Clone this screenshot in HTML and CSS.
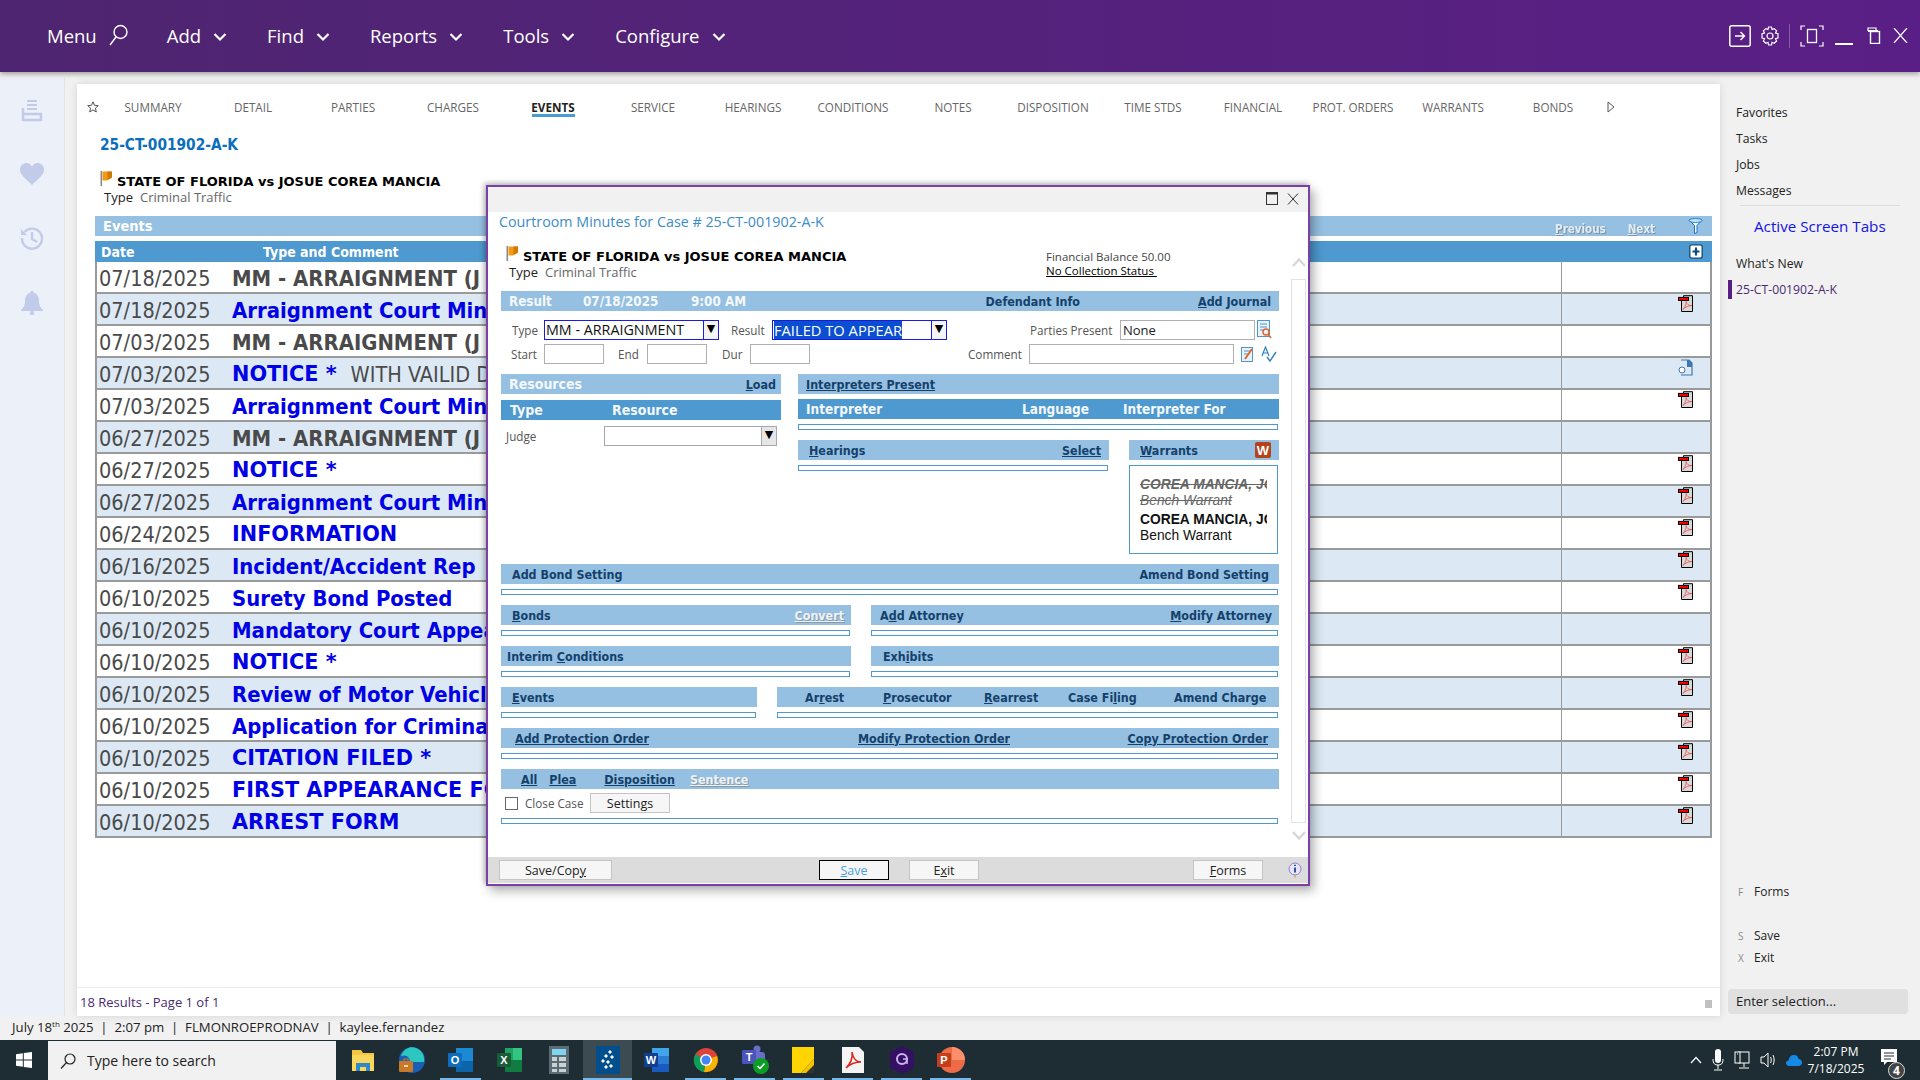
FILE: index.html
```html
<!DOCTYPE html>
<html lang="en">
<head>
<meta charset="utf-8">
<title>Courtroom Minutes</title>
<link rel="stylesheet" href="styles.css">
</head>
<body>
<svg class="defs" width="0" height="0" aria-hidden="true">
  <symbol id="pdf" viewBox="0 0 15 17">
    <path d="M3.500 5.500V16.500H14.500V0.700H5.500V2" fill="#d8d8d8" stroke="#000" stroke-width="1"/>
    <rect x="0.500" y="2.400" width="10" height="3" fill="#f00" stroke="#000" stroke-width="1"/>
    <path d="M5 14.500C7 12 8.500 9 8 6.500C8.500 9 11 11 14 10.500C11 10.500 7 12 5 14.500Z" fill="none" stroke="#f05050" stroke-width="0.800"/>
  </symbol>
  <symbol id="flag" viewBox="0 0 13 15">
    <rect x="0.500" y="0" width="1.600" height="15" fill="#8a8a8a"/>
    <path d="M2.500 0.500H12V6.500L7 9.500H2.500Z" fill="#f29b12"/>
    <path d="M7.500 0.500H12V6.500L7.500 9Z" fill="#cf7a06"/>
  </symbol>
  <symbol id="chev" viewBox="0 0 14 10"><path d="M1.500 2L7 7.500L12.500 2" fill="none" stroke="#fff" stroke-width="2.200"/></symbol>
</svg>

<div class="app">
  <header class="topbar">
    <nav class="topnav">
      <span class="tn tn-menu">Menu<svg class="tn-search" width="22" height="22" viewBox="0 0 22 22"><circle cx="13.500" cy="8" r="6.500" fill="none" stroke="#fff" stroke-width="1.400"/><path d="M9 13L3 21" stroke="#fff" stroke-width="1.400"/></svg></span>
      <span class="tn">Add<svg class="chev"><use href="#chev"/></svg></span>
      <span class="tn">Find<svg class="chev"><use href="#chev"/></svg></span>
      <span class="tn">Reports<svg class="chev"><use href="#chev"/></svg></span>
      <span class="tn">Tools<svg class="chev"><use href="#chev"/></svg></span>
      <span class="tn">Configure<svg class="chev"><use href="#chev"/></svg></span>
    </nav>
    <div class="wincontrols">
      <svg class="wc wc-login" width="22" height="22" viewBox="0 0 22 22"><rect x="0.800" y="0.800" width="20.400" height="20.400" rx="2" fill="none" stroke="#fff" stroke-width="1.500"/><path d="M6 11H15M11.500 7L15.500 11L11.500 15" fill="none" stroke="#fff" stroke-width="1.400"/></svg>
      <svg class="wc wc-gear" width="20" height="20" viewBox="0 0 20 20"><circle cx="10" cy="10" r="3" fill="none" stroke="#fff" stroke-width="1.200"/><path d="M8.500 1H11.500L12 3.500L14.200 2.600L16.600 4.800L15.500 7L18 7.700V12L15.500 12.700L16.600 15L14.200 17.300L12 16.300L11.500 19H8.500L8 16.300L5.800 17.300L3.400 15L4.500 12.700L2 12V7.700L4.500 7L3.400 4.800L5.800 2.600L8 3.500Z" fill="none" stroke="#fff" stroke-width="1.200"/></svg>
      <span class="wc-div"></span>
      <svg class="wc wc-expand" width="24" height="22" viewBox="0 0 24 22"><path d="M1 5V1H5M19 1H23V5M23 17V21H19M5 21H1V17" fill="none" stroke="#fff" stroke-width="1.200"/><rect x="7.500" y="4.500" width="9" height="13" fill="none" stroke="#fff" stroke-width="1.300"/></svg>
      <svg class="wc wc-min" width="18" height="22" viewBox="0 0 18 22"><rect x="0" y="18" width="18" height="2" fill="#fff"/></svg>
      <svg class="wc wc-restore" width="16" height="17" viewBox="0 0 16 17"><path d="M2 4V1H10V4" fill="none" stroke="#fff" stroke-width="1.200"/><rect x="4.500" y="4.500" width="9" height="12" fill="none" stroke="#fff" stroke-width="1.400"/><rect x="2" y="3" width="10" height="2" fill="#fff"/></svg>
      <svg class="wc wc-x" width="15" height="15" viewBox="0 0 15 15"><path d="M1 0L14 15M14 0L1 15" stroke="#fff" stroke-width="1.200"/></svg>
    </div>
  </header>

  <div class="workspace">
    <aside class="rail">
      <svg width="22" height="22" viewBox="0 0 22 22"><path d="M6 1H16M6 5H16M6 9H16" stroke="#c3cbea" stroke-width="2"/><path d="M2 8V20H20V14H2" fill="none" stroke="#c3cbea" stroke-width="2.500"/></svg>
      <svg width="24" height="22" viewBox="0 0 24 22"><path d="M12 22C6 16 0 12 0 6.500C0 2.500 3 0 6.500 0C9 0 11 1.300 12 3.500C13 1.300 15 0 17.500 0C21 0 24 2.500 24 6.500C24 12 18 16 12 22Z" fill="#c3cbea"/></svg>
      <svg width="24" height="24" viewBox="0 0 24 24"><path d="M4.500 6A10 10 0 1 1 2 12" fill="none" stroke="#c3cbea" stroke-width="2.400"/><path d="M1 3V9H7Z" fill="#c3cbea"/><path d="M12 6V13L17 16" fill="none" stroke="#c3cbea" stroke-width="2.400"/></svg>
      <svg width="22" height="24" viewBox="0 0 22 24"><path d="M11 0C12.500 0 13 1 13 2C16.500 3 18 6 18 10C18 15 20 17 22 19V20H0V19C2 17 4 15 4 10C4 6 5.500 3 9 2C9 1 9.500 0 11 0Z" fill="#c3cbea"/><circle cx="11" cy="22" r="2.200" fill="#c3cbea"/></svg>
    </aside>

    <main class="panel">
      <div class="tabs">
        <svg class="tab-star" width="12" height="12" viewBox="0 0 12 12"><path d="M6 0.800L7.500 4.300L11.300 4.600L8.400 7.100L9.300 11L6 8.900L2.700 11L3.600 7.100L0.700 4.600L4.500 4.300Z" fill="none" stroke="#555" stroke-width="1"/></svg>
        <span class="tab">SUMMARY</span><span class="tab">DETAIL</span><span class="tab">PARTIES</span><span class="tab">CHARGES</span><span class="tab tab-on">EVENTS</span><span class="tab">SERVICE</span><span class="tab">HEARINGS</span><span class="tab">CONDITIONS</span><span class="tab">NOTES</span><span class="tab">DISPOSITION</span><span class="tab">TIME STDS</span><span class="tab">FINANCIAL</span><span class="tab">PROT. ORDERS</span><span class="tab">WARRANTS</span><span class="tab">BONDS</span>
        <svg class="tab-more" width="8" height="12" viewBox="0 0 8 12"><path d="M1 1L7 6L1 11Z" fill="none" stroke="#555" stroke-width="1"/></svg>
      </div>
      <div class="caseno">25-CT-001902-A-K</div>
      <div class="casetitle"><svg class="flag"><use href="#flag"/></svg><b>STATE OF FLORIDA vs JOSUE COREA MANCIA</b></div>
      <div class="casetype"><span>Type</span><em>Criminal Traffic</em></div>

      <section class="events">
        <div class="ev-bar"><b>Events</b><span class="ev-links"><u>P</u>revious<span class="ev-next"><u>N</u>ext</span></span>
          <svg class="ev-filter" width="15" height="16" viewBox="0 0 15 16"><path d="M1 2H14L9 7.500V14.500L6.500 15.500V7.500Z" fill="#fff" stroke="#1173c7" stroke-width="1"/><ellipse cx="7.500" cy="2.500" rx="6.500" ry="2" fill="#bfe0f7" stroke="#1173c7" stroke-width="0.800"/></svg>
        </div>
        <div class="ev-head"><span class="ev-date">Date</span><span class="ev-type">Type and Comment</span>
          <svg class="ev-plus" width="14" height="15" viewBox="0 0 14 15"><rect x="0.800" y="0.800" width="12.400" height="13.400" rx="2" fill="#fff" stroke="#0f4a78" stroke-width="1.300"/><path d="M7 3.500V11.500M3.500 7.500H10.500" stroke="#0f4a78" stroke-width="2.200"/></svg>
        </div>
        <div class="rows">
          <div class="row"><span class="d">07/18/2025</span><span class="t mc">MM - ARRAIGNMENT (J</span><span class="ic"></span></div>
          <div class="row"><span class="d">07/18/2025</span><span class="t l mc">Arraignment Court Min</span><span class="ic"><svg class="pdf"><use href="#pdf"/></svg></span></div>
          <div class="row"><span class="d">07/03/2025</span><span class="t mc">MM - ARRAIGNMENT (J</span><span class="ic"></span></div>
          <div class="row"><span class="d">07/03/2025</span><span class="t l">NOTICE *</span><span class="c">WITH VAILID D</span><span class="ic"><svg class="pdf" viewBox="0 0 15 17"><path d="M3 1H11L14 4V16H3" fill="#dce9f4" stroke="#3f77b0" stroke-width="1.200"/><path d="M9 1H11L14 4V8H9Z" fill="#3f77b0"/><circle cx="4" cy="11" r="3" fill="#fff" stroke="#3f77b0" stroke-width="1"/></svg></span></div>
          <div class="row"><span class="d">07/03/2025</span><span class="t l mc">Arraignment Court Min</span><span class="ic"><svg class="pdf"><use href="#pdf"/></svg></span></div>
          <div class="row"><span class="d">06/27/2025</span><span class="t mc">MM - ARRAIGNMENT (J</span><span class="ic"></span></div>
          <div class="row"><span class="d">06/27/2025</span><span class="t l">NOTICE *</span><span class="ic"><svg class="pdf"><use href="#pdf"/></svg></span></div>
          <div class="row"><span class="d">06/27/2025</span><span class="t l mc">Arraignment Court Min</span><span class="ic"><svg class="pdf"><use href="#pdf"/></svg></span></div>
          <div class="row"><span class="d">06/24/2025</span><span class="t l">INFORMATION</span><span class="ic"><svg class="pdf"><use href="#pdf"/></svg></span></div>
          <div class="row"><span class="d">06/16/2025</span><span class="t l mc">Incident/Accident Rep</span><span class="ic"><svg class="pdf"><use href="#pdf"/></svg></span></div>
          <div class="row"><span class="d">06/10/2025</span><span class="t l mc">Surety Bond Posted</span><span class="ic"><svg class="pdf"><use href="#pdf"/></svg></span></div>
          <div class="row"><span class="d">06/10/2025</span><span class="t l mc">Mandatory Court Appea</span><span class="ic"></span></div>
          <div class="row"><span class="d">06/10/2025</span><span class="t l">NOTICE *</span><span class="ic"><svg class="pdf"><use href="#pdf"/></svg></span></div>
          <div class="row"><span class="d">06/10/2025</span><span class="t l mc">Review of Motor Vehicl</span><span class="ic"><svg class="pdf"><use href="#pdf"/></svg></span></div>
          <div class="row"><span class="d">06/10/2025</span><span class="t l mc">Application for Crimina</span><span class="ic"><svg class="pdf"><use href="#pdf"/></svg></span></div>
          <div class="row"><span class="d">06/10/2025</span><span class="t l">CITATION FILED *</span><span class="ic"><svg class="pdf"><use href="#pdf"/></svg></span></div>
          <div class="row"><span class="d">06/10/2025</span><span class="t l">FIRST APPEARANCE FO</span><span class="ic"><svg class="pdf"><use href="#pdf"/></svg></span></div>
          <div class="row"><span class="d">06/10/2025</span><span class="t l">ARREST FORM</span><span class="ic"><svg class="pdf"><use href="#pdf"/></svg></span></div>
        </div>
      </section>

      <footer class="panelfoot"><span>18 Results - Page 1 of 1</span><i class="grip"></i></footer>
    </main>

    <aside class="side">
      <a class="si">Favorites</a>
      <a class="si">Tasks</a>
      <a class="si">Jobs</a>
      <a class="si">Messages</a>
      <hr class="side-hr">
      <div class="side-head">Active Screen Tabs</div>
      <a class="si si-new">What's New</a>
      <a class="si si-active">25-CT-001902-A-K</a>
      <div class="side-keys">
        <a class="key"><i>F</i>Forms</a>
        <a class="key key-save"><i>S</i>Save</a>
        <a class="key"><i>X</i>Exit</a>
      </div>
      <div class="side-input">Enter selection...</div>
    </aside>
  </div>

  <div class="status">July 18<sup>th</sup> 2025&nbsp; | &nbsp;2:07 pm&nbsp; | &nbsp;FLMONROEPRODNAV&nbsp; | &nbsp;kaylee.fernandez</div>

  <div class="taskbar">
    <span class="start"><svg width="16" height="16" viewBox="0 0 16 16"><path d="M0 2.300L6.800 1.300V7.600H0ZM7.800 1.100L16 0V7.600H7.800ZM0 8.500H6.800V14.800L0 13.800ZM7.800 8.500H16V16L7.800 14.900Z" fill="#fff"/></svg></span>
    <div class="search"><svg width="16" height="16" viewBox="0 0 16 16"><circle cx="10" cy="6" r="5" fill="none" stroke="#222" stroke-width="1.200"/><path d="M6.500 9.500L1 15.500" stroke="#222" stroke-width="1.200"/></svg><span>Type here to search</span></div>
    <div class="apps">
      <span class="app-i"><svg width="24" height="26" viewBox="0 0 24 26"><path d="M1 3H10L12 6H23V24H1Z" fill="#f4c542"/><rect x="1" y="8" width="22" height="16" fill="#f9d65c"/><rect x="5" y="16" width="14" height="8" fill="#2f88c9"/><rect x="9" y="20" width="6" height="4" fill="#f9d65c"/></svg></span>
      <span class="app-i"><svg width="28" height="28" viewBox="0 0 28 28"><circle cx="14" cy="14" r="13" fill="#1a5fb4"/><path d="M3 10C6 2 13 0 18 2C24 4 27 10 26 16H12C12 12 9 8 3 10Z" fill="#2cc8c0"/><rect x="1" y="15" width="14" height="11" rx="1" fill="#c9792a"/><rect x="6" y="13" width="4" height="3" fill="none" stroke="#c9792a"/><rect x="6" y="19" width="4" height="2" fill="#f1d9a0"/></svg></span>
      <span class="app-i app-on"><svg width="26" height="26" viewBox="0 0 26 26"><rect x="8" y="1" width="17" height="24" fill="#1a8ad4"/><path d="M8 14H25V25H8Z" fill="#0c64ab"/><rect x="0" y="6" width="14" height="14" rx="1" fill="#0f6cbd"/><text x="7" y="17" class="ti">O</text></svg></span>
      <span class="app-i"><svg width="26" height="26" viewBox="0 0 26 26"><rect x="8" y="1" width="17" height="24" fill="#21a366"/><rect x="16" y="1" width="9" height="24" fill="#33c481"/><rect x="8" y="13" width="17" height="12" fill="#107c41"/><rect x="0" y="6" width="14" height="14" rx="1" fill="#185c37"/><text x="7" y="17" class="ti">X</text></svg></span>
      <span class="app-i"><svg width="20" height="28" viewBox="0 0 20 28"><rect width="20" height="28" fill="#5d6b73"/><rect x="3" y="3" width="14" height="6" fill="#7fd4f0"/><path d="M3 11H8V15H3ZM10 11H17V15H10ZM3 17H8V21H3ZM10 17H17V21H10ZM3 23H8V26H3ZM10 23H17V26H10Z" fill="#c9d2d6"/></svg></span>
      <span class="app-i app-on app-cur"><svg width="24" height="28" viewBox="0 0 24 28"><rect width="24" height="28" fill="#004f8c"/><path d="M14 4L16 6L14 8L12 6ZM10 8L12 10L10 12L8 10ZM16 9L18 11L16 13L14 11ZM7 13L9 15L7 17L5 15ZM12 14L14 16L12 18L10 16ZM10 19L12 21L10 23L8 21ZM15 18L17 20L15 22L13 20Z" fill="#fff"/></svg></span>
      <span class="app-i"><svg width="26" height="26" viewBox="0 0 26 26"><rect x="8" y="1" width="17" height="24" fill="#41a5ee"/><rect x="8" y="9" width="17" height="8" fill="#2b7cd3"/><rect x="8" y="17" width="17" height="8" fill="#185abd"/><rect x="0" y="6" width="14" height="14" rx="1" fill="#103f91"/><text x="7" y="17" class="ti">W</text></svg></span>
      <span class="app-i app-on"><svg width="26" height="26" viewBox="0 0 26 26"><circle cx="13" cy="13" r="12" fill="#db4437"/><path d="M13 13L24 9A12 12 0 0 1 11 25Z" fill="#f4b400"/><path d="M13 13L11 25A12 12 0 0 1 2.500 7Z" fill="#0f9d58"/><circle cx="13" cy="13" r="6" fill="#fff"/><circle cx="13" cy="13" r="4.500" fill="#4285f4"/></svg></span>
      <span class="app-i app-on"><svg width="28" height="32" viewBox="0 0 28 32"><circle cx="16" cy="5" r="3.500" fill="#6a6ec9"/><rect x="10" y="8" width="14" height="12" rx="3" fill="#6a6ec9"/><rect x="1" y="6" width="14" height="14" rx="1" fill="#4b53bc"/><text x="8" y="17" class="ti">T</text><circle cx="20" cy="22" r="8" fill="#0c9d25"/><path d="M16.500 22L19 24.500L23.500 19.500" fill="none" stroke="#fff" stroke-width="1.500"/></svg></span>
      <span class="app-i app-on"><svg width="24" height="26" viewBox="0 0 24 26"><rect width="22" height="26" fill="#ffd400"/><path d="M22 12V26H9Z" fill="#333"/><path d="M22 12L9 26H14L22 18Z" fill="#f5c400"/></svg></span>
      <span class="app-i app-on"><svg width="22" height="26" viewBox="0 0 22 26"><path d="M0 0H17L22 5V26H0Z" fill="#f4f4f4"/><path d="M4 21C8 17 11 11 10 5C11 11 14 15 19 15C14 15 8 17 4 21Z" fill="none" stroke="#d9241c" stroke-width="1.500"/></svg></span>
      <span class="app-i app-on"><svg width="24" height="28" viewBox="0 0 24 28"><path d="M12 0L24 6V22L12 28L0 22V6Z" fill="#341063"/><circle cx="12" cy="13" r="5" fill="none" stroke="#cbb2f0" stroke-width="2"/><path d="M13 13H17V18" fill="none" stroke="#cbb2f0" stroke-width="1.500"/></svg></span>
      <span class="app-i app-on"><svg width="28" height="26" viewBox="0 0 28 26"><circle cx="15" cy="13" r="13" fill="#ed6c47"/><path d="M15 0A13 13 0 0 1 28 13H15Z" fill="#ff8f6b"/><rect x="0" y="6" width="14" height="14" rx="1" fill="#c43e1c"/><text x="7" y="17" class="ti">P</text></svg></span>
    </div>
    <div class="tray">
      <svg width="12" height="8" viewBox="0 0 12 8"><path d="M1 7L6 1.500L11 7" fill="none" stroke="#fff" stroke-width="1.200"/></svg>
      <svg width="12" height="22" viewBox="0 0 12 22"><rect x="3" y="0" width="6" height="14" rx="3" fill="#fff"/><path d="M1 10C1 15 3 16 6 16C9 16 11 15 11 10M6 16V20M2 21H10" fill="none" stroke="#fff" stroke-width="1"/></svg>
      <svg width="16" height="18" viewBox="0 0 16 18"><rect x="5" y="1" width="10" height="11" fill="none" stroke="#fff"/><rect x="1" y="1" width="5" height="11" fill="#1d2d33" stroke="#fff"/><path d="M3 3H4M10 12V16M5 17H15" stroke="#fff"/></svg>
      <svg width="16" height="18" viewBox="0 0 16 18"><path d="M1 6H4L8 2V16L4 12H1Z" fill="none" stroke="#fff"/><path d="M10.500 6C11.500 8 11.500 10 10.500 12M13 4C14.500 7 14.500 11 13 14" fill="none" stroke="#fff"/></svg>
      <svg width="16" height="12" viewBox="0 0 16 12"><path d="M3 12C1 12 0 10.500 0 9C0 7.500 1 6.500 2.500 6.500C3 3 5 1 8 1C10.500 1 12 2.500 12.500 5C14.500 5 16 6.500 16 8.500C16 10.500 14.500 12 12.500 12Z" fill="#1589e6"/></svg>
      <div class="clock"><span>2:07 PM</span><span>7/18/2025</span></div>
      <div class="notif"><svg width="16" height="18" viewBox="0 0 16 18"><path d="M0 0H16V13H6L3 16V13H0Z" fill="#fff"/><path d="M3 4H13M3 7H13M3 10H10" stroke="#1d2d33"/></svg><b>4</b></div>
    </div>
  </div>

  <div class="modal">
    <div class="m-top">
      <svg width="12" height="13" viewBox="0 0 12 13"><rect x="0.500" y="0.500" width="11" height="12" fill="none" stroke="#333"/><rect x="0.500" y="0.500" width="11" height="2" fill="#333"/></svg>
      <svg width="12" height="12" viewBox="0 0 12 12"><path d="M1 0.500L11 11.500M11 0.500L1 11.500" stroke="#333" stroke-width="1"/></svg>
    </div>
    <div class="m-body">
      <div class="m-content">
        <div class="m-title">Courtroom Minutes for Case # 25-CT-001902-A-K</div>
        <div class="m-case">
          <div class="m-case-l">
            <div class="casetitle"><svg class="flag"><use href="#flag"/></svg><b>STATE OF FLORIDA vs JOSUE COREA MANCIA</b></div>
            <div class="casetype"><span>Type</span><em>Criminal Traffic</em></div>
          </div>
          <div class="m-case-r">
            <div>Financial Balance 50.00</div>
            <div class="nocoll">No Collection Status&nbsp;</div>
          </div>
        </div>

        <div class="bar"><span class="w wr1">Result</span><span class="w wr2">07/18/2025</span><span class="w">9:00 AM</span><span class="sp"></span><span class="ln di">Defendant Info</span><a class="ln"><u>A</u>dd Journal</a></div>

        <div class="frow f1">
          <label class="lb lb-type">Type</label>
          <div class="sel sel-on"><span>MM - ARRAIGNMENT</span><i class="arr">▼</i></div>
          <label class="lb lb-result">Result</label>
          <div class="sel sel-on"><span class="hl">FAILED TO APPEAR</span><i class="arr">▼</i></div>
          <label class="lb lb-pp">Parties Present</label>
          <div class="inp inp-none">None</div>
          <svg class="ficon" width="15" height="20" viewBox="0 0 15 20"><rect x="0.500" y="0.500" width="12" height="16" fill="#e8f2fb" stroke="#4f94cf"/><path d="M3 4H10M3 7H10M3 10H7" stroke="#4f94cf"/><circle cx="9" cy="12" r="3" fill="none" stroke="#e0672a" stroke-width="1.500"/><path d="M11 14L14 18" stroke="#e0672a" stroke-width="1.500"/></svg>
        </div>
        <div class="frow f2">
          <label class="lb lb-start">Start</label><div class="inp inp-s"></div>
          <label class="lb lb-end">End</label><div class="inp inp-s"></div>
          <label class="lb lb-dur">Dur</label><div class="inp inp-s"></div>
          <label class="lb lb-comment">Comment</label><div class="inp inp-c"></div>
          <svg class="ficon fi2" width="13" height="16" viewBox="0 0 13 16"><rect x="0.500" y="1.500" width="11" height="14" fill="#e8f2fb" stroke="#4f94cf"/><path d="M3 5H9M3 8H7" stroke="#4f94cf"/><path d="M4 13L11 3" stroke="#e0672a" stroke-width="2"/></svg>
          <svg class="ficon fi3" width="16" height="16" viewBox="0 0 16 16"><path d="M1 10L4.500 1L8 10M2.500 7H6.500" fill="none" stroke="#2f7fc0" stroke-width="1.200"/><path d="M6 11L9 15L15 6" fill="none" stroke="#2f7fc0" stroke-width="1.400"/></svg>
        </div>

        <div class="cols">
          <div class="col-l">
            <div class="bar"><span class="w w-res">Resources</span><span class="sp"></span><a class="ln lnload"><u>L</u>oad</a></div>
            <div class="hbar"><span class="h-type">Type</span><span>Resource</span></div>
            <div class="judge"><label class="lb">Judge</label><div class="sel sel-g"><span></span><i class="arr">▼</i></div></div>
          </div>
          <div class="col-r">
            <div class="bar"><a class="ln un">Interpreters Present</a></div>
            <div class="hbar hbar-i"><span class="h-i1">Interpreter</span><span class="h-i2">Language</span><span>Interpreter For</span></div>
            <div class="box"></div>
            <div class="hw">
              <div class="hw-h">
                <div class="bar"><a class="ln lnh"><u>H</u>earings</a><span class="sp"></span><a class="ln un">Select</a></div>
                <div class="box"></div>
              </div>
              <div class="hw-w">
                <div class="bar"><a class="ln lnh"><u>W</u>arrants</a><span class="sp"></span>
                  <svg width="16" height="16" viewBox="0 0 16 16"><rect x="0" y="0" width="16" height="16" rx="2" fill="#b5421a"/><text x="8" y="13" class="tw">W</text></svg>
                </div>
                <div class="wbox">
                  <div class="wn wn-old">COREA MANCIA, JOSUE</div>
                  <div class="wd wd-old">Bench Warrant</div>
                  <div class="wn">COREA MANCIA, JOSUE</div>
                  <div class="wd">Bench Warrant</div>
                </div>
              </div>
            </div>
          </div>
        </div>

        <div class="sec">
          <div class="bar bar-p"><a class="ln">Add Bond Setting</a><span class="sp"></span><a class="ln">Amend Bond Setting</a></div>
          <div class="box"></div>
        </div>

        <div class="sec sec2">
          <div><div class="bar bar-p"><a class="ln"><u>B</u>onds</a><span class="sp"></span><a class="dis dis-c">Convert</a></div><div class="box"></div></div>
          <div><div class="bar bar-a"><a class="ln">A<u>d</u>d Attorney</a><span class="sp"></span><a class="ln"><u>M</u>odify Attorney</a></div><div class="box"></div></div>
        </div>

        <div class="sec sec2">
          <div><div class="bar bar-c"><a class="ln">Interim <u>C</u>onditions</a></div><div class="box"></div></div>
          <div><div class="bar bar-e"><a class="ln">Exh<u>i</u>bits</a></div><div class="box"></div></div>
        </div>

        <div class="sec sec3">
          <div><div class="bar bar-p"><a class="ln"><u>E</u>vents</a></div><div class="box"></div></div>
          <div><div class="bar bar-ar"><a class="ln">Ar<u>r</u>est</a><a class="ln"><u>P</u>rosecutor</a><a class="ln"><u>R</u>earrest</a><a class="ln">Case Fi<u>l</u>ing</a><a class="ln">Amend Charge</a></div><div class="box"></div></div>
        </div>

        <div class="sec">
          <div class="bar bar-pr"><a class="ln un pr1">Add Protection Order</a><a class="ln un pr2">Modify Protection Order</a><a class="ln un">Copy Protection Order</a></div>
          <div class="box"></div>
        </div>

        <div class="sec">
          <div class="bar bar-all"><a class="ln un a1">All</a><a class="ln un a2">Plea</a><a class="ln un a3">Disposition</a><a class="dis un">Sentence</a></div>
          <div class="close"><span class="cb"></span><label class="lb">Close Case</label><span class="btn btn-set">Settings</span></div>
          <div class="box"></div>
        </div>
      </div>
      <div class="m-scroll">
        <svg width="14" height="9" viewBox="0 0 14 9"><path d="M1 8L7 1.500L13 8" fill="none" stroke="#d8d8d8" stroke-width="2.500"/></svg>
        <div class="m-track"></div>
        <svg width="14" height="9" viewBox="0 0 14 9"><path d="M1 1L7 7.500L13 1" fill="none" stroke="#d8d8d8" stroke-width="2.500"/></svg>
      </div>
    </div>
    <div class="m-foot">
      <span class="btn btn-copy">Save/Cop<u>y</u></span>
      <span class="btn btn-save"><u>S</u>ave</span>
      <span class="btn btn-exit">E<u>x</u>it</span>
      <span class="btn btn-forms"><u>F</u>orms</span>
      <svg class="m-info" width="14" height="16" viewBox="0 0 14 16"><circle cx="7" cy="7" r="6" fill="#e8e4f6" stroke="#8d7fd0"/><path d="M7 5.500V10.500M7 2.800V4" stroke="#2b58a0" stroke-width="2"/><path d="M7 13V16" stroke="#e0a030"/></svg>
    </div>
  </div>
</div>
</body>
</html>
```

FILE: styles.css
```css
* { box-sizing: border-box; }
html, body { margin: 0; padding: 0; height: 100%; overflow: hidden; }
body { font-family: "Open Sans", "Liberation Sans", sans-serif; color: #222; background: #f1f1f1; }
.defs { position: absolute; }
.app { position: relative; width: 1920px; height: 1080px; display: grid; grid-template-rows: 72px 944px 24px 40px; overflow: hidden; }

.topbar { display: flex; align-items: center; justify-content: space-between; background: linear-gradient(90deg, #4e2570, #5a1f86); box-shadow: 0 2px 5px rgba(0,0,0,.35); position: relative; z-index: 2; }
.topnav { display: flex; padding-left: 47px; margin-top: -2px; }
.tn { display: flex; align-items: center; color: #fff; font-size: 18.500px; margin-right: 40px; height: 28px; }
.tn-menu { margin-right: 38px; }
.tn-search { margin-left: 10px; }
.chev { width: 14px; height: 10px; margin-left: 12px; margin-top: 3px; }
.wincontrols { display: flex; align-items: center; height: 22px; margin-top: -1px; }
.wc { display: block; }
.wc-login { margin-right: 9px; }
.wc-gear { margin-right: 9px; }
.wc-div { width: 1px; height: 24px; background: #8060a0; margin-right: 10px; }
.wc-expand { margin-right: 11px; }
.wc-min { margin-right: 13px; }
.wc-restore { margin-right: 11px; }
.wc-x { margin-right: 12px; }

.workspace { display: grid; grid-template-columns: 65px 12px 1643px 200px; }
.rail { grid-column: 1; margin-top: 6px; background: #ecf0f9; border-right: 1px solid #e2e4ea; display: flex; flex-direction: column; align-items: center; padding-top: 22px; gap: 41px; }
.panel { grid-column: 3; margin-top: 12px; background: #fff; display: flex; flex-direction: column; box-shadow: 0 0 8px rgba(0,0,0,.12); height: 932px; }

.tabs { height: 34px; display: flex; align-items: flex-start; position: relative; padding-top: 15px; }
.tab-star { margin: 2px 4px 0 10px; flex: none; }
.tab { width: 100px; flex: none; text-align: center; font-size: 11.700px; line-height: 16px; color: #666; height: 20px; }
.tab-on { font-weight: 700; color: #222; position: relative; }
.tab-on::after { content: ""; position: absolute; left: 29px; width: 43px; top: 15px; height: 3px; background: #4a9bd4; }
.tab-more { margin: 2px 0 0 4px; }

.caseno { margin: 17px 0 0 23px; line-height: 20px; font-size: 15.300px; font-weight: 700; color: #0b6ebd; font-family: "DejaVu Sans Condensed", "DejaVu Sans", sans-serif; }
.casetitle { display: flex; align-items: flex-end; height: 16px; font-family: "DejaVu Sans", sans-serif; font-size: 13px; color: #000; white-space: nowrap; }
.panel > .casetitle { margin: 18px 0 0 23px; }
.flag { width: 13px; height: 15px; margin-right: 4px; margin-bottom: 3px; flex: none; }
.casetype { font-size: 13px; height: 17px; line-height: 17px; color: #222; padding-left: 3px; }
.panel > .casetype { margin-left: 24px; }
.casetype em { font-style: normal; color: #666; margin-left: 7px; }

.events { margin: 10px 0 0 18px; width: 1617px; font-family: "DejaVu Sans Condensed", "DejaVu Sans", sans-serif; }
.ev-bar { height: 20px; background: #95c0e2; display: flex; align-items: center; padding-left: 8px; color: #fff; font-size: 14.500px; position: relative; }
.ev-links { margin-left: auto; margin-right: 33px; margin-top: 5px; font-size: 11.500px; font-weight: 700; color: #eaf2f8; text-shadow: 1px 1px 0 #7d8a96; opacity: .9; }
.ev-next { margin-left: 22px; }
.ev-filter { margin-right: 9px; }
.ev-head { margin-top: 5px; height: 21px; background: #4e99cf; display: flex; align-items: center; color: #fff; font-size: 14px; font-weight: 700; padding-left: 6px; }
.ev-date { width: 162px; }
.ev-plus { margin-left: auto; margin-right: 9px; }
.rows { border-left: 2px solid #9a9a9a; border-right: 2px solid #9a9a9a; }
.row { height: 32px; display: flex; align-items: center; padding-top: 2px; border-bottom: 2px solid #9a9a9a; font-size: 21.500px; color: #4a4a4a; position: relative; background: #fff; white-space: nowrap; overflow: hidden; }
.row:nth-child(even) { background: #dce9f4; }
.row .d { width: 135px; padding-left: 2px; flex: none; }
.row .t { font-family: "DejaVu Sans", sans-serif; font-size: 20.800px; font-weight: 700; flex: none; }
.row .mc { font-family: "DejaVu Sans Condensed", "DejaVu Sans", sans-serif; font-size: 21.900px; }
.row .l { color: #0000e6; }
.row .c { margin-left: 14px; flex: none; }
.ic { position: absolute; left: 1464px; top: 0; bottom: 0; right: 0; border-left: 1px solid #9a9a9a; padding: 1px 0 0 116px; background: inherit; }
.pdf { width: 15px; height: 17px; display: block; }

.panelfoot { margin-top: auto; height: 29px; border-top: 1px solid #ececec; display: flex; align-items: center; justify-content: space-between; padding: 0 8px 0 3px; color: #4a2a70; font-size: 13px; }
.grip { width: 7px; height: 8px; background: #c0c0c0; margin-top: 4px; }

.side { grid-column: 4; padding-top: 28px; display: flex; flex-direction: column; font-size: 12.200px; height: 944px; }
.si { display: block; height: 26px; line-height: 26px; padding-left: 16px; color: #222; }
.side-hr { border: 0; border-top: 1px solid #ddd; width: 160px; margin: 1px 0 0 20px; }
.side-head { margin: 10px 0 0 34px; line-height: 20px; font-size: 15.200px; color: #1414e6; }
.si-new { margin-top: 15px; }
.si-active { position: relative; color: #4a2a70; }
.si-active::before { content: ""; position: absolute; left: 8px; top: 3px; width: 4px; height: 19px; background: #571f84; }
.side-keys { margin-top: auto; }
.key { display: flex; height: 22px; line-height: 22px; font-size: 12px; padding-left: 18px; }
.key i { font-style: normal; color: #8a8a8a; width: 16px; font-size: 10px; }
.key-save { margin-top: 22px; }
.side-input { margin: 20px 12px 2px 8px; height: 25px; line-height: 25px; border-radius: 4px; background: #e0e0e0; padding-left: 8px; color: #222; font-size: 13px; }

.status { font-size: 13.200px; line-height: 22px; padding-left: 12px; color: #222; white-space: nowrap; }
.status sup { font-size: 8px; line-height: 0; }

.taskbar { background: #1d2d33; display: flex; align-items: stretch; }
.start { width: 48px; display: flex; align-items: center; justify-content: center; }
.search { width: 288px; margin-top: 1px; background: #f1f1f1; display: flex; align-items: center; padding-left: 12px; gap: 11px; font-size: 14px; color: #222; }
.apps { display: flex; margin-left: 2px; }
.app-i { width: 49px; display: flex; align-items: center; justify-content: center; position: relative; }
.app-on::after { content: ""; position: absolute; left: 4px; right: 4px; bottom: 0; height: 2px; background: #76b9ed; }
.app-cur { background: #3b4b51; }
.app-cur::after { left: 0; right: 0; }
.ti { font: 700 11px "Liberation Sans", sans-serif; fill: #fff; text-anchor: middle; }
.tw { font: 700 13px "Liberation Sans", sans-serif; fill: #fff; text-anchor: middle; }
.tray { margin-left: auto; display: flex; align-items: center; gap: 10px; padding-right: 15px; color: #fff; }
.clock { display: flex; flex-direction: column; align-items: center; font-size: 12px; line-height: 17px; width: 60px; margin: 0 -1px 0 -6px; }
.notif { position: relative; width: 30px; padding-left: 6px; }
.notif b { position: absolute; right: 0; bottom: -7px; width: 17px; height: 17px; border-radius: 50%; background: #444; border: 1px solid #ddd; text-align: center; font-size: 12px; line-height: 15px; }

.modal { position: absolute; left: 486px; top: 185px; width: 824px; height: 701px; z-index: 5; background: #fff; border: 2px solid #7b3fa8; display: flex; flex-direction: column; box-shadow: -2px -2px 5px rgba(0,0,0,.25), 4px 5px 10px rgba(0,0,0,.3); font-family: "DejaVu Sans Condensed", "DejaVu Sans", sans-serif; }
.m-top { height: 25px; flex: none; background: #f1f1f1; display: flex; align-items: center; justify-content: flex-end; gap: 9px; padding: 0 9px 2px 0; }
.m-body { flex: 1; display: flex; padding-left: 13px; min-height: 0; }
.m-content { width: 778px; flex: none; }
.m-title { height: 20px; line-height: 20px; font-family: "Open Sans", sans-serif; font-size: 14.300px; color: #3c8cc8; margin-left: -2px; white-space: nowrap; }
.m-case { margin-top: 14px; height: 45px; display: flex; padding-left: 5px; }
.m-case .casetitle { height: 18px; }
.m-case .casetype { font-family: "Open Sans", sans-serif; }
.m-case-l { width: 540px; }
.m-case-r { font-family: "Open Sans", sans-serif; font-size: 11.500px; line-height: 14px; color: #444; padding-top: 4px; white-space: nowrap; }
.nocoll { color: #000; text-decoration: underline; }

.bar { height: 20px; background: #95c0e2; display: flex; align-items: center; padding: 0 8px; font-size: 12.400px; font-weight: 700; white-space: nowrap; }
.sp { flex: 1; }
.w { color: #f4f8fb; font-size: 13.300px; }
.w-res { font-size: 14px; }
.wr1 { width: 74px; }
.wr2 { width: 108px; }
.ln { color: #14406b; }
.un { text-decoration: underline; }
.di { margin-right: 118px; }
.lnload { margin-right: -3px; }
.dis { color: #eef3f7; text-shadow: 1px 1px 0 #8c98a2; text-decoration: underline; }
.dis-c { margin-right: -3px; }

.frow { display: flex; align-items: center; height: 20px; position: relative; }
.frow > * { flex: none; }
.f1 { margin-top: 9px; }
.f2 { margin-top: 4px; }
.lb { font-family: "Open Sans", sans-serif; font-size: 11.700px; color: #555; white-space: nowrap; }
.lb-type { width: 43px; padding-left: 11px; }
.lb-result { width: 41px; margin-left: 12px; }
.lb-pp { margin-left: 83px; width: 90px; }
.lb-start { width: 43px; padding-left: 10px; }
.lb-end { width: 43px; padding-left: 14px; }
.lb-dur { width: 43px; padding-left: 15px; }
.lb-comment { margin-left: 158px; width: 61px; }
.sel { position: relative; width: 175px; height: 20px; flex: none; border: 1px solid #1a1ae6; background: #fff; font-size: 14.300px; font-family: "Open Sans", sans-serif; line-height: 18px; padding-left: 1px; color: #111; white-space: nowrap; overflow: hidden; }
.sel-g { border-color: #a8a8a8; width: 173px; }
.arr { position: absolute; right: 0; top: 0; width: 15px; height: 18px; border-left: 1px solid #1a1ae6; font-style: normal; font-family: "DejaVu Sans", sans-serif; font-size: 11px; text-align: center; line-height: 15px; color: #000; background: #f4f4f4; }
.sel-g .arr { border-left-color: #a8a8a8; background: #e6e6e6; }
.hl { background: #0a4fd0; color: #fff; display: inline-block; font-size: 14.700px; }
.inp { height: 20px; border: 1px solid #b0b0b0; background: #fff; font-family: "Open Sans", sans-serif; font-size: 13px; line-height: 18px; padding-left: 2px; color: #222; }
.inp-none { width: 135px; }
.inp-s { width: 60px; }
.inp-c { width: 205px; }
.ficon { margin-left: 2px; }
.fi2 { margin-left: 7px; }
.fi3 { margin-left: 7px; }

.cols { display: flex; gap: 17px; margin-top: 10px; height: 180px; }
.col-l { width: 280px; }
.col-r { width: 481px; }
.hbar { height: 20px; margin-top: 6px; background: #4e99cf; color: #f4f8fb; font-size: 14px; font-weight: 700; display: flex; align-items: center; padding-left: 9px; white-space: nowrap; }
.h-type { width: 102px; }
.hbar-i { margin-top: 5px; padding-left: 8px; font-size: 13.500px; }
.h-i1 { width: 216px; }
.h-i2 { width: 101px; }
.box { height: 6px; margin-top: 5px; border: 1px solid #4e99cf; width: calc(100% - 1px); }
.judge { display: flex; align-items: center; justify-content: space-between; margin-top: 6px; padding: 0 4px 0 5px; }
.hw { display: flex; gap: 20px; margin-top: 10px; }
.hw-h { width: 311px; }
.hw-w { width: 150px; }
.lnh { padding-left: 3px; }
.wbox { margin-top: 5px; height: 89px; width: 149px; border: 1px solid #4e99cf; padding: 11px 10px 0 10px; overflow: hidden; white-space: nowrap; font-family: "Liberation Sans", sans-serif; font-size: 13.800px; line-height: 16px; color: #111; }
.wn { font-weight: 700; overflow: hidden; }
.wd { margin-bottom: 3px; }
.wn-old, .wd-old { color: #666; font-style: italic; text-decoration: line-through; }

.sec { margin-top: 10px; }
.sec2 { display: grid; grid-template-columns: 350px 408px; gap: 20px; }
.sec3 { display: grid; grid-template-columns: 256px 502px; gap: 20px; }
.bar-p { padding: 0 10px 0 11px; }
.bar-a { padding: 0 7px 0 9px; }
.bar-c { padding: 0 6px; }
.bar-e { padding: 0 12px; }
.bar-ar { display: grid; grid-template-columns: 78px 101px 84px 106px auto; padding: 0 0 0 28px; }
.bar-pr { padding: 0 11px 0 14px; }
.pr1 { width: 343px; }
.pr2 { margin-right: auto; }
.bar-all { padding-left: 20px; }
.a1 { margin-right: 12px; }
.a2 { margin-right: 28px; }
.a3 { margin-right: 15px; }
.close { display: flex; align-items: center; height: 20px; margin-top: 4px; padding-left: 4px; }
.cb { width: 13px; height: 13px; border: 1px solid #666; background: #fff; margin-right: 7px; }
.close .lb { width: 65px; }
.btn { display: flex; align-items: center; justify-content: center; height: 20px; background: #f6f6f6; border: 1px solid #c4c4c4; font-family: "Open Sans", sans-serif; font-size: 12.500px; color: #222; white-space: nowrap; }
.btn-set { width: 80px; }

.m-scroll { width: 15px; margin-left: 12px; display: flex; flex-direction: column; align-items: center; padding-top: 46px; }
.m-track { width: 15px; height: 544px; margin: 12px 0 8px; border: 1px solid #e2e2e2; flex: none; }
.m-foot { height: 26px; flex: none; background: #dcdcdc; display: flex; align-items: center; padding-left: 11px; margin-bottom: 1px; }
.btn-copy { width: 113px; }
.btn-save { width: 70px; margin-left: 207px; border: 1px solid #000; color: #4a9fe0; }
.btn-exit { width: 70px; margin-left: 20px; }
.btn-forms { width: 70px; margin-left: 214px; }
.m-info { margin-left: 25px; }
```
